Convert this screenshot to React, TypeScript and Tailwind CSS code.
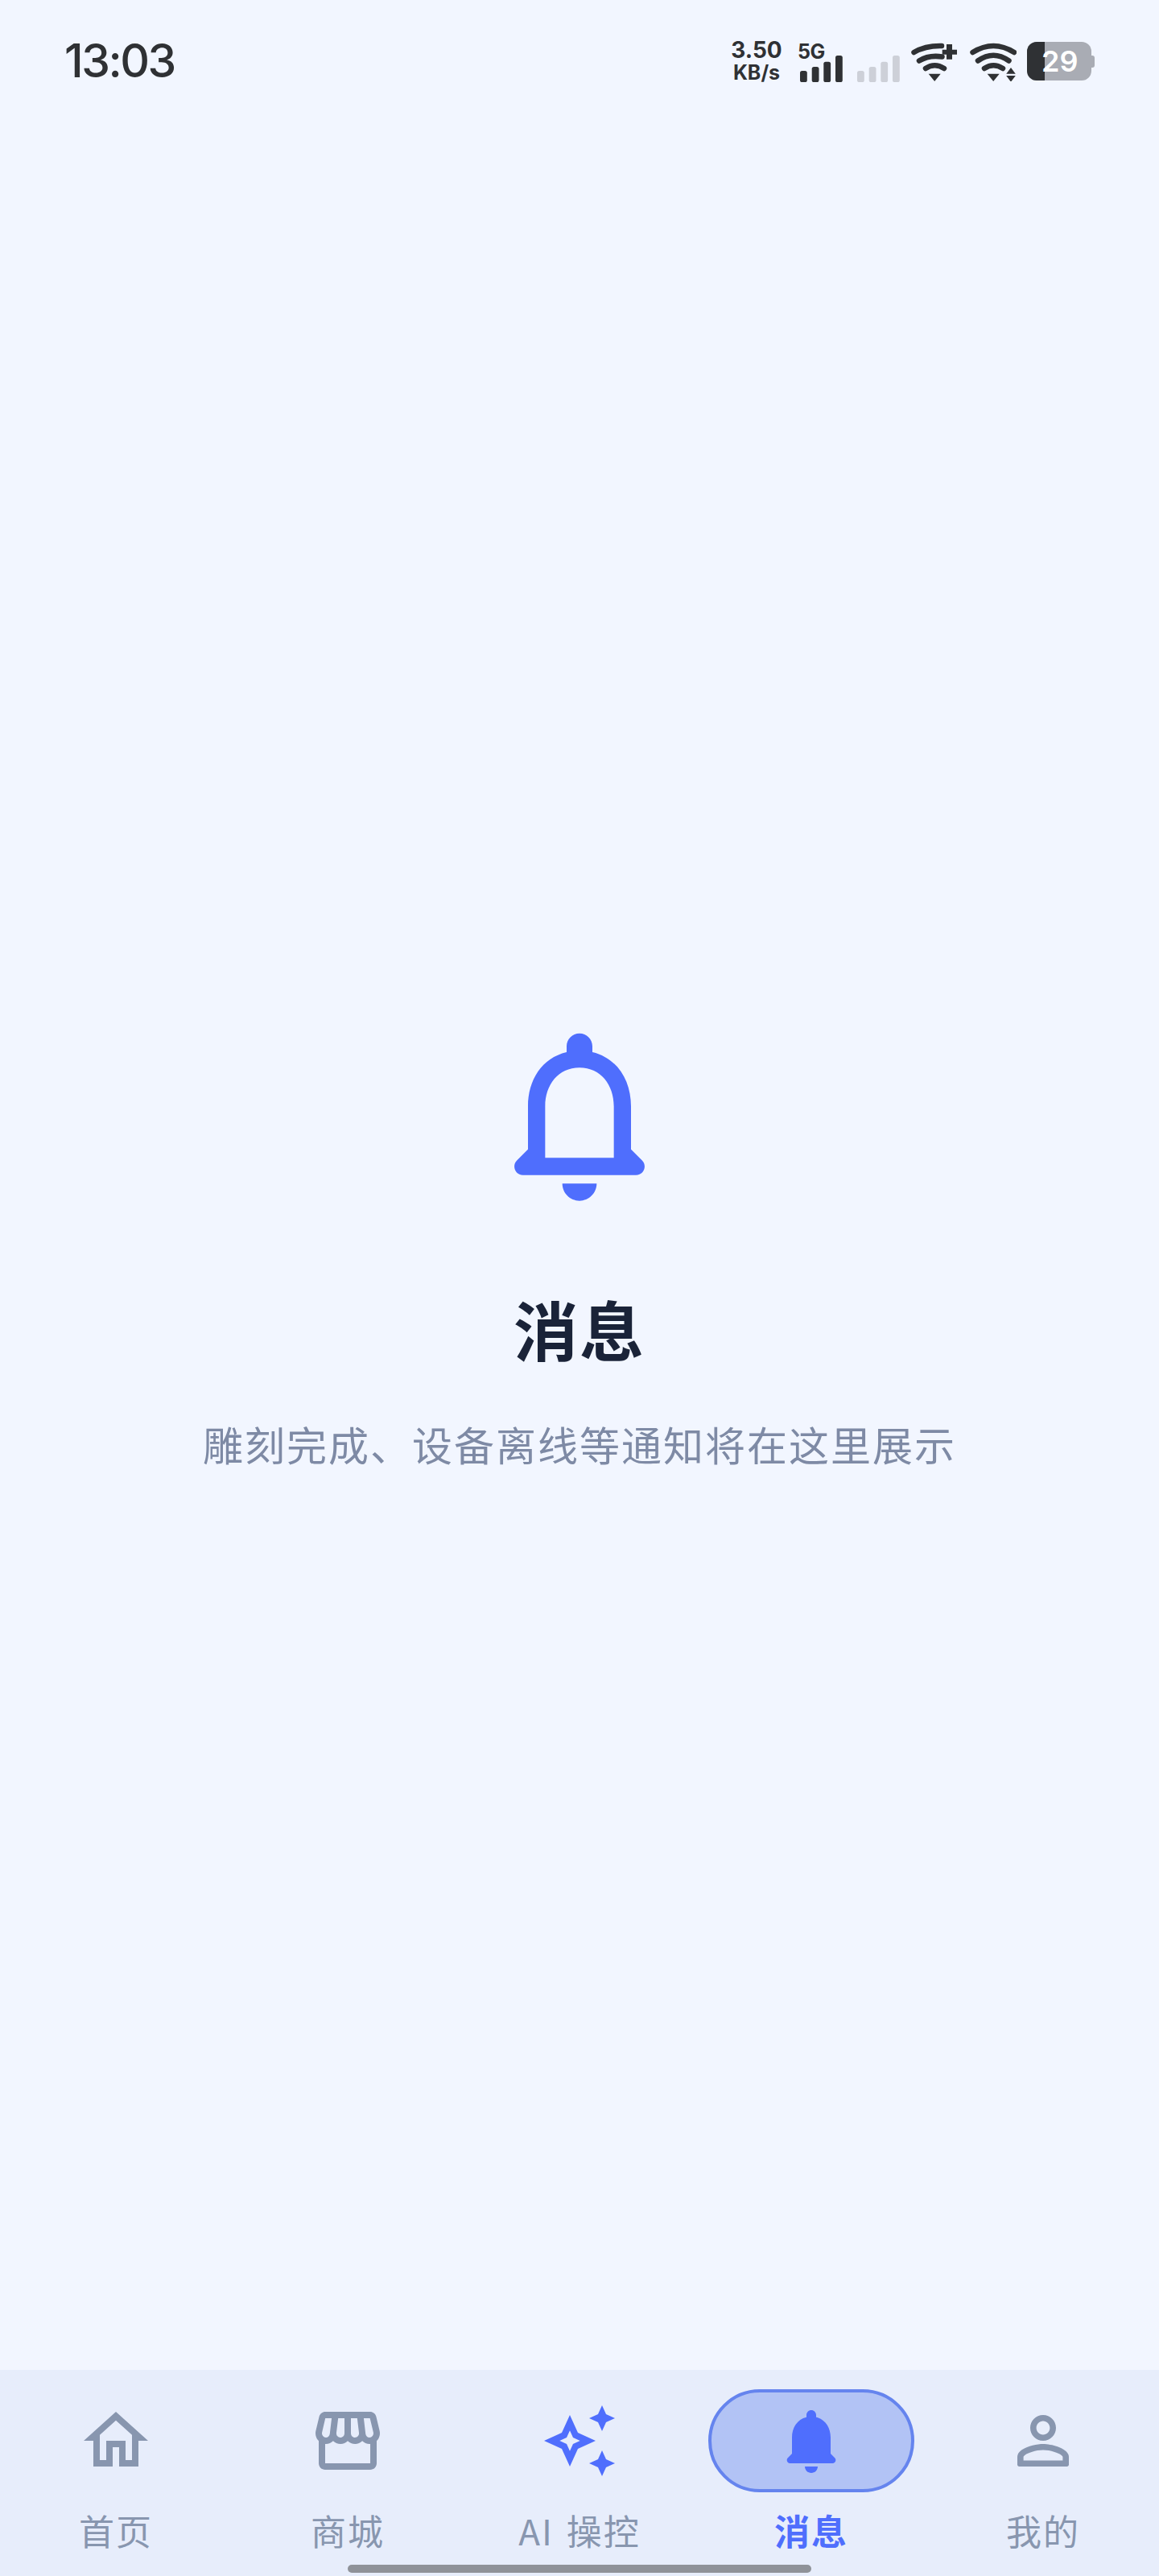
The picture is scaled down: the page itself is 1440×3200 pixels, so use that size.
const CJK = "font-['Noto_Sans_CJK_SC','Noto_Sans_CJK_SC',sans-serif]";

function Icon({ d, className }: { d: string; className: string }) {
  return (
    <svg viewBox="0 0 24 24" fill="currentColor" fillRule="evenodd" className={className}>
      <path d={d} />
    </svg>
  );
}

const HOME = "M12 5.69l5 4.5V18h-2v-6H9v6H7v-7.81l5-4.5M12 3L2 12h3v8h6v-6h2v6h6v-8h3L12 3z";
const STORE =
  "M21.9 8.89l-1.05-4.37c-.22-.9-1-1.52-1.91-1.52H5.05c-.9 0-1.69.63-1.9 1.52L2.1 8.89c-.24 1.02-.02 2.06.62 2.88.08.11.19.19.28.29V19c0 1.1.9 2 2 2h14c1.1 0 2-.9 2-2v-6.94c.09-.09.2-.18.28-.28.64-.82.87-1.87.62-2.89zm-2.99-3.9l1.05 4.37c.1.42.01.84-.25 1.17-.14.18-.44.47-.94.47-.61 0-1.14-.49-1.21-1.14L16.98 5l1.93-.01zM13 5h1.96l.54 4.52c.05.39-.07.78-.33 1.07-.22.26-.54.41-.95.41-.67 0-1.22-.59-1.22-1.31V5zM8.49 9.52L9.04 5H11v4.69c0 .72-.55 1.31-1.29 1.31-.34 0-.65-.15-.89-.41-.25-.29-.37-.68-.33-1.07zm-4.45-.16L5.05 5h1.97l-.58 4.86c-.08.65-.6 1.14-1.21 1.14-.49 0-.8-.29-.93-.47-.27-.32-.36-.75-.26-1.17zM5 19v-6.03c.08.01.15.03.23.03.87 0 1.66-.36 2.24-.95.6.6 1.4.95 2.31.95.87 0 1.65-.36 2.23-.93.59.57 1.39.93 2.29.93.84 0 1.64-.35 2.24-.95.58.59 1.37.95 2.24.95.08 0 .15-.02.23-.03V19H5z";
const SPARKLES =
  "M19 9l1.25-2.75L23 5l-2.75-1.25L19 1l-1.25 2.75L15 5l2.75 1.25L19 9zm-7.5.5L9 4 6.5 9.5 1 12l5.5 2.5L9 20l2.5-5.5L17 12l-5.5-2.5zM9.99 12.99L9 15.17l-.99-2.18L5.83 12l2.18-.99L9 8.83l.99 2.18 2.18.99-2.18.99zM19 15l-1.25 2.75L15 19l2.75 1.25L19 23l1.25-2.75L23 19l-2.75-1.25L19 15z";
const BELL_FILLED =
  "M12 22c1.1 0 2-.9 2-2h-4c0 1.1.89 2 2 2zm6-6v-5c0-3.07-1.64-5.64-4.5-6.32V4c0-.83-.67-1.5-1.5-1.5s-1.5.67-1.5 1.5v.68C7.63 5.36 6 7.92 6 11v5l-1.29 1.29c-.63.63-.19 1.71.7 1.71h13.17c.89 0 1.34-1.08.71-1.71L18 16z";
const BELL_OUTLINE =
  "M19.29 17.29L18 16v-5c0-3.07-1.64-5.64-4.5-6.32V4c0-.83-.67-1.5-1.5-1.5s-1.5.67-1.5 1.5v.68C7.63 5.36 6 7.92 6 11v5l-1.29 1.29c-.63.63-.19 1.71.7 1.71h13.17c.9 0 1.34-1.08.71-1.71zM16 17H8v-6c0-2.48 1.51-4.5 4-4.5s4 2.02 4 4.5v6zm-4 5c1.1 0 2-.9 2-2h-4c0 1.1.89 2 2 2z";
const PERSON =
  "M12 5.9c1.16 0 2.1.94 2.1 2.1s-.94 2.1-2.1 2.1S9.9 9.16 9.9 8s.94-2.1 2.1-2.1zm0 9c2.97 0 6.1 1.46 6.1 2.1v1.1H5.9V17c0-.64 3.13-2.1 6.1-2.1zM12 4C9.79 4 8 5.79 8 8s1.79 4 4 4 4-1.79 4-4-1.79-4-4-4zm0 9c-2.67 0-8 1.34-8 4v2.4c0 .33.27.6.6.6h14.8c.33 0 .6-.27.6-.6V17c0-2.66-5.33-4-8-4z";

function SignalBars({ className }: { className: string }) {
  const bars = [
    { x: 0, y: 19 },
    { x: 14.7, y: 14 },
    { x: 29.3, y: 7.7 },
    { x: 44, y: 0 },
  ];
  return (
    <svg viewBox="0 0 53 33" fill="currentColor" className={`h-[33px] w-[53px] ${className}`}>
      {bars.map((bar) => (
        <rect key={bar.x} x={bar.x} y={bar.y} width="8.8" height={33 - bar.y} rx="2.6" />
      ))}
    </svg>
  );
}

function Wifi({ badge }: { badge: "plus" | "arrows" }) {
  return (
    <svg viewBox="0 0 58 50" fill="currentColor" className="h-[50px] w-[58px]">
      {badge === "plus" ? (
        <>
          <g fill="none" stroke="currentColor" strokeWidth="6.5" strokeLinecap="round">
            <path d="M3.5 14Q18 5.5 38 6" />
            <path d="M10 24.5Q22 17 38.5 19.5" />
            <path d="M18 34Q29.3 26.5 41 34" />
          </g>
          <path d="M44 4h7v6.7h6v6h-6v6h-7v-6h-5.3v-6H44z" />
        </>
      ) : (
        <>
          <g fill="none" stroke="currentColor" strokeWidth="6.5" strokeLinecap="round">
            <path d="M3.5 14Q29.3 -2 55 14" />
            <path d="M10 24.5Q29.3 11 48.5 24.5" />
            <path d="M18 34Q29.3 26.5 41 34" />
          </g>
          <path d="M51 33l5.8 7.7H45.2zM51 50.7L45.2 43h11.6z" />
        </>
      )}
      <path d="M21.7 40.7h15L29.2 50z" />
    </svg>
  );
}

function NavItem({ label, d, iconColor = "text-[#8896AF]", active = false }: { label: string; d: string; iconColor?: string; active?: boolean }) {
  return (
    <div className="flex flex-col items-center">
      <div className={`flex h-[128px] w-[256px] items-center justify-center rounded-full border-4 ${active ? "border-[#6584EE] bg-[#B2C3F5]" : "border-transparent"}`}>
        <Icon d={d} className={`size-24 ${iconColor}`} />
      </div>
      <span className={`mt-[15px] text-[44px] leading-[64px] tracking-[2px] [word-spacing:4px] ${CJK} ${active ? "font-bold text-[#4F6EFD]" : "text-[#8896AF]"}`}>{label}</span>
    </div>
  );
}

export default function App() {
  return (
    <div className="relative flex h-[3200px] w-[1440px] flex-col overflow-hidden bg-[#F2F6FF]">
      <div className="flex h-[104px] items-center justify-between px-[80px] pt-[48px] text-[#2F3134]">
        <span className="font-['Inter',sans-serif] text-[57px] font-medium leading-[56px] tracking-[-2.5px]">13:03</span>
        <div className="flex items-center">
          <div className="flex w-[62px] flex-col items-center font-['Inter',sans-serif] font-bold">
            <span className="text-[28px] leading-[28px]">3.50</span>
            <span className="text-[25px] leading-[29px]">KB/s</span>
          </div>
          <div className="ml-[20px] flex flex-col items-start">
            <span className="h-[18px] font-['Inter',sans-serif] text-[25px] font-bold leading-[26px] tracking-[-0.5px]">5G</span>
            <SignalBars className="ml-[3px] text-[#2F3134]" />
          </div>
          <SignalBars className="ml-[18px] mt-[18px] text-[#CDD0D8]" />
          <div className="ml-[14px]"><Wifi badge="plus" /></div>
          <div className="ml-[15px]"><Wifi badge="arrows" /></div>
          <div className="relative ml-[13px] flex items-center">
            <div className="flex h-[48px] w-[80px] overflow-hidden rounded-[12px] bg-[#A9ACB4]">
              <div className="w-[22px] bg-[#2F3134]" />
            </div>
            <div className="h-[15px] w-[4px] rounded-r-[3px] bg-[#A9ACB4]" />
            <span className="absolute left-[18px] top-[2px] font-['Inter',sans-serif] text-[36px] font-semibold leading-[44px] text-white">29</span>
          </div>
        </div>
      </div>

      <main className="flex flex-1 flex-col items-center pt-[1153px]">
        <Icon d={BELL_OUTLINE} className="size-[256px] text-[#4F6EFD]" />
        <h1 className={`mt-[81px] text-[80px] font-bold leading-[110px] tracking-[2px] text-[#1A2338] ${CJK}`}>消息</h1>
        <p className={`mt-[53px] text-[50px] leading-[72px] tracking-[2px] text-[#7E8AA5] ${CJK}`}>雕刻完成、设备离线等通知将在这里展示</p>
      </main>

      <nav className="grid h-[256px] grid-cols-5 bg-[#E7EDFB] pt-[24px]">
        <NavItem label="首页" d={HOME} />
        <NavItem label="商城" d={STORE} />
        <NavItem label="AI 操控" d={SPARKLES} iconColor="text-[#4F6EFD]" />
        <NavItem label="消息" d={BELL_FILLED} iconColor="text-[#4F6EFD]" active />
        <NavItem label="我的" d={PERSON} />
      </nav>
      <div className="absolute bottom-[4px] left-[432px] h-[10px] w-[576px] rounded-full bg-[#8F9299]" />
    </div>
  );
}
